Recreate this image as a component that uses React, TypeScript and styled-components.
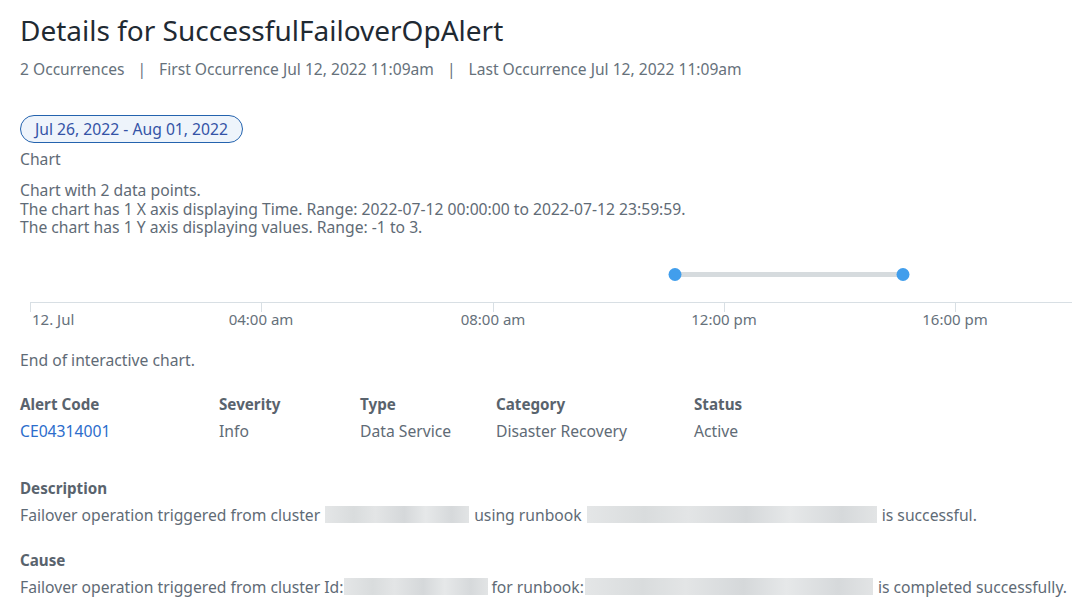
import React from "react";
import styled, { createGlobalStyle } from "styled-components";

const GlobalStyle = createGlobalStyle`
  body {
    margin: 0;
    background: #ffffff;
    font-family: "Noto Sans", "Open Sans", sans-serif;
    color: #5f6b76;
    overflow: hidden;
  }
`;

const Page = styled.div`
  width: 1072px;
  padding: 12px 0 0 20px;
  box-sizing: border-box;
`;

const Title = styled.h1`
  margin: 0;
  font-size: 28px;
  font-weight: 400;
  line-height: 36px;
  color: #1f2a33;
`;

const MetaRow = styled.div`
  display: flex;
  align-items: center;
  gap: 13px;
  margin-top: 11px;
  font-size: 15.6px;
  line-height: 20px;
  color: #66717b;
`;

const Divider = styled.span`
  color: #66717b;
`;

const DatePill = styled.div`
  display: inline-block;
  margin-top: 36px;
  padding: 3px 14px 3px;
  border: 1px solid #2463ae;
  border-radius: 14px;
  background: #eef4fb;
  color: #3453a6;
  font-size: 15.7px;
  line-height: 20px;
`;

const Caption = styled.div<{ $gap: number }>`
  margin-top: ${(p) => p.$gap}px;
  font-size: 15.7px;
  line-height: 20px;
`;

const ChartSummary = styled.div`
  margin-top: 12px;
  font-size: 15.7px;
  line-height: 18.5px;
`;

const ChartWrap = styled.div`
  margin-top: 13px;
  margin-left: -20px;
  width: 1072px;
  height: 90px;
`;

const TableGrid = styled.div`
  display: grid;
  grid-template-columns: 199px 141px 136px 198px 150px;
  row-gap: 7px;
  margin-top: 24px;
`;

const HeadCell = styled.div`
  font-size: 15.2px;
  font-weight: 700;
  line-height: 20px;
  color: #59636d;
`;

const ValueCell = styled.div<{ $link?: boolean }>`
  font-size: 15.7px;
  line-height: 20px;
  color: ${(p) => (p.$link ? "#2c6dcc" : "#5f6b76")};
`;

const Section = styled.div`
  margin-top: 37px;
  & + & {
    margin-top: 25px;
  }
`;

const SectionHead = styled.div`
  font-size: 15.2px;
  font-weight: 700;
  line-height: 20px;
  color: #59636d;
`;

const SectionText = styled.div`
  display: flex;
  align-items: center;
  margin-top: 7px;
  font-size: 15.7px;
  line-height: 20px;
  white-space: nowrap;
`;

const Redacted = styled.span<{ $w: number; $left: number; $right: number }>`
  display: inline-block;
  width: ${(p) => p.$w}px;
  height: 17px;
  margin: 0 ${(p) => p.$right}px 0 ${(p) => p.$left}px;
  background: linear-gradient(
    90deg,
    #e4e6e7 0%,
    #d9dcdd 20%,
    #e3e5e6 35%,
    #d5d8da 55%,
    #e6e8e9 70%,
    #d6d9db 88%,
    #e2e4e5 100%
  );
  filter: blur(0.6px);
`;

const ticks = [
  { x: 30, label: "12. Jul", anchor: "start" as const },
  { x: 261, label: "04:00 am", anchor: "middle" as const },
  { x: 493, label: "08:00 am", anchor: "middle" as const },
  { x: 724, label: "12:00 pm", anchor: "middle" as const },
  { x: 955, label: "16:00 pm", anchor: "middle" as const },
];

function TimeChart() {
  return (
    <ChartWrap>
      <svg width="1072" height="90" viewBox="0 250 1072 90">
        <line x1="675" y1="274.5" x2="903" y2="274.5" stroke="#d6dbde" strokeWidth="5" />
        <circle cx="675" cy="274.5" r="6.5" fill="#419eec" />
        <circle cx="903" cy="274.5" r="6.5" fill="#419eec" />
        <line x1="30" y1="302.5" x2="1072" y2="302.5" stroke="#d8dfe4" strokeWidth="1" />
        {ticks.map((t) => (
          <g key={t.label}>
            <line x1={t.x + 0.5} y1="302" x2={t.x + 0.5} y2="312" stroke="#d8dfe4" strokeWidth="1" />
            <text
              x={t.anchor === "start" ? t.x + 2 : t.x}
              y="325"
              textAnchor={t.anchor}
              fontSize="15"
              fill="#66717b"
              fontFamily='"Noto Sans", "Open Sans", sans-serif'
            >
              {t.label}
            </text>
          </g>
        ))}
      </svg>
    </ChartWrap>
  );
}

export default function App() {
  return (
    <Page>
      <GlobalStyle />
      <Title>Details for SuccessfulFailoverOpAlert</Title>
      <MetaRow>
        <span>2 Occurrences</span>
        <Divider>|</Divider>
        <span>First Occurrence Jul 12, 2022 11:09am</span>
        <Divider>|</Divider>
        <span>Last Occurrence Jul 12, 2022 11:09am</span>
      </MetaRow>
      <DatePill>Jul 26, 2022 - Aug 01, 2022</DatePill>
      <Caption $gap={6}>Chart</Caption>
      <ChartSummary>
        <div>Chart with 2 data points.</div>
        <div>The chart has 1 X axis displaying Time. Range: 2022-07-12 00:00:00 to 2022-07-12 23:59:59.</div>
        <div>The chart has 1 Y axis displaying values. Range: -1 to 3.</div>
      </ChartSummary>
      <TimeChart />
      <Caption $gap={10}>End of interactive chart.</Caption>
      <TableGrid>
        <HeadCell>Alert Code</HeadCell>
        <HeadCell>Severity</HeadCell>
        <HeadCell>Type</HeadCell>
        <HeadCell>Category</HeadCell>
        <HeadCell>Status</HeadCell>
        <ValueCell $link>CE04314001</ValueCell>
        <ValueCell>Info</ValueCell>
        <ValueCell>Data Service</ValueCell>
        <ValueCell>Disaster Recovery</ValueCell>
        <ValueCell>Active</ValueCell>
      </TableGrid>
      <Section>
        <SectionHead>Description</SectionHead>
        <SectionText>
          Failover operation triggered from cluster
          <Redacted $w={144} $left={5} $right={5} />
          using runbook
          <Redacted $w={290} $left={5} $right={5} />
          is successful.
        </SectionText>
      </Section>
      <Section>
        <SectionHead>Cause</SectionHead>
        <SectionText>
          Failover operation triggered from cluster Id:
          <Redacted $w={144} $left={1} $right={3} />
          for runbook:
          <Redacted $w={288} $left={1} $right={5} />
          is completed successfully.
        </SectionText>
      </Section>
    </Page>
  );
}
